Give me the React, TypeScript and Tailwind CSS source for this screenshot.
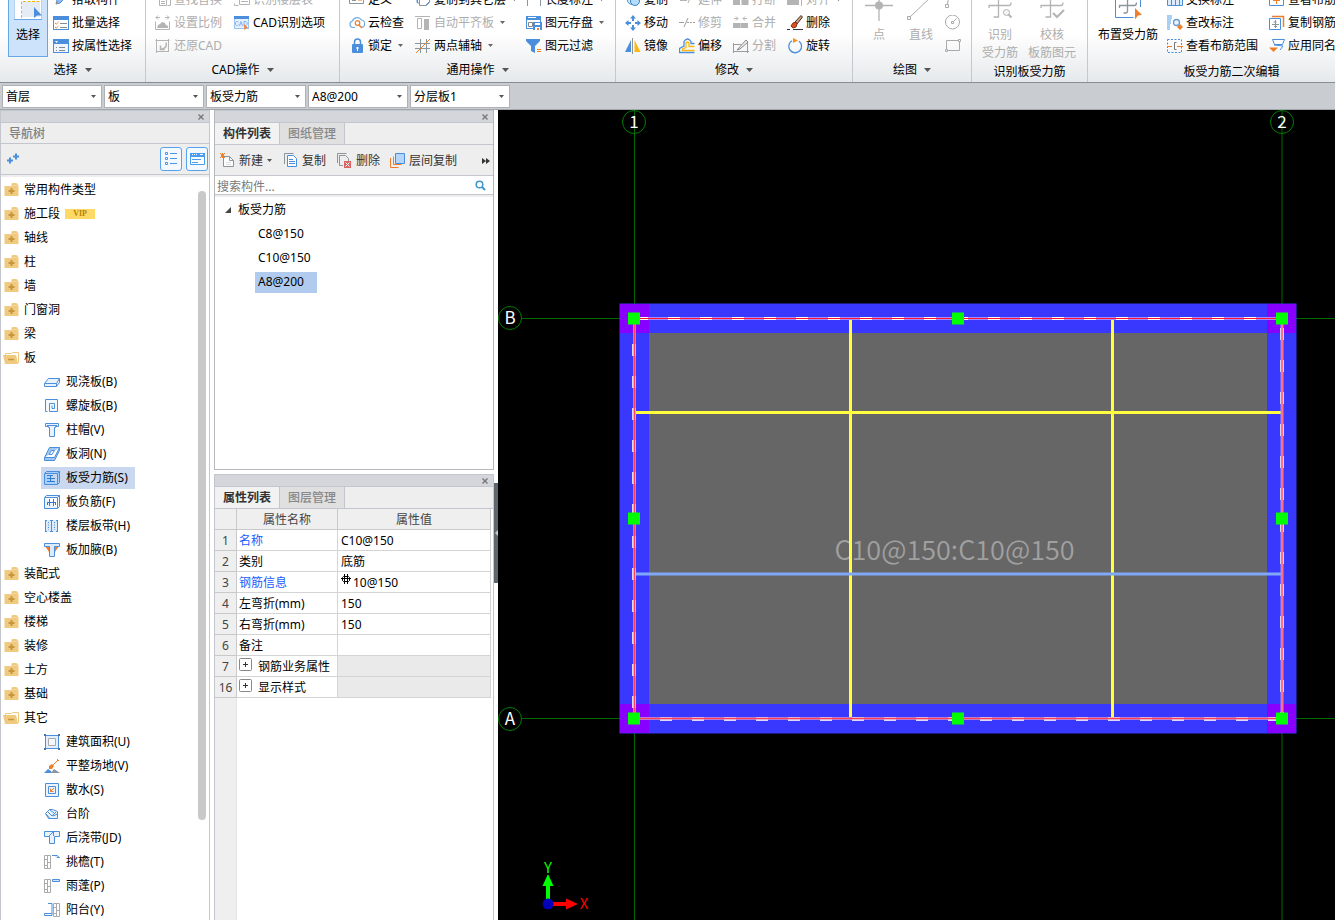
import type { ReactNode } from 'react';

const B = '#4a8edc';
const G = '#b4b4b4';
const O = '#f07d28';
const D = '#8a959c';

function Svg({ children, size = 16, className = '' }: { children: ReactNode; size?: number; className?: string }) {
  return (
    <svg
      viewBox={`0 0 ${size} ${size}`}
      width={size}
      height={size}
      fill="none"
      strokeWidth="1"
      className={`shrink-0 ${className}`}
      aria-hidden="true"
    >
      {children}
    </svg>
  );
}

function Caret({ big = false, className = '' }: { big?: boolean; className?: string }) {
  return big ? (
    <svg width="7" height="4" viewBox="0 0 7 4" className={`shrink-0 ${className}`} aria-hidden="true">
      <path d="M0 0h7L3.5 4z" fill="currentColor" />
    </svg>
  ) : (
    <svg width="5" height="3" viewBox="0 0 5 3" className={`shrink-0 ${className}`} aria-hidden="true">
      <path d="M0 0h5L2.5 3z" fill="currentColor" />
    </svg>
  );
}

/* ---------- ribbon icons ---------- */

const ic = {
  pick: (
    <Svg>
      <path d="M3 12l1-4 7-7 3 3-7 7z" fill="#8fbdf0" stroke={B} />
      <path d="M3 12l2-1-1-2z" fill={O} />
    </Svg>
  ),
  batch: (
    <Svg>
      <rect x=".5" y="1.5" width="15" height="13" fill="#fff" stroke={B} />
      <path d="M1 2h14v3H1z" fill={B} />
      <path d="M2 8l1.200 1.200L5.500 7M2 12l1.200 1.200L5.500 11" stroke={O} />
      <path d="M7 8.500h7M7 12.500h7" stroke="#888" />
    </Svg>
  ),
  attr: (
    <Svg>
      <rect x=".5" y="1.500" width="15" height="13" fill="#eef5fd" stroke={B} />
      <path d="M1 2h14v4H1z" fill={B} />
      <path d="M2 3h3L3.500 5z" fill="#fff" />
      <path d="M3 9.500h1M3 12.500h1M6 9.500h6M6 12.500h6" stroke="#888" />
    </Svg>
  ),
  replace: (
    <Svg>
      <path d="M4.500 4.500h7v9h-7zM6 7.500h4M6 9.500h4M6 11.500h4M12.500 4.500h3v9h-3" stroke={G} />
    </Svg>
  ),
  scale: (
    <Svg>
      <path d="M.5 6.500v8h14v-8M1 2.500h4M10 2.500h4M3 .5l-2 2 2 2M12 .5l2 2-2 2" stroke={G} />
      <path d="M2 13l1-3 2-1 2-2 3 1 1 2 2 1v2z" fill={G} />
    </Svg>
  ),
  restore: (
    <Svg>
      <path d="M1.500 1v14M.5 2.500h14M13.500 1v12M1 13.500h13" stroke={G} />
      <path d="M6 11.500c5-1 6-4 5-7M5.500 7.500v4h4" stroke={G} strokeWidth="1.500" />
    </Svg>
  ),
  floorTable: (
    <Svg>
      <path d="M1.500 3.500h3M.5 11.500v2h4M5.500 4.500h10v8h-10zM7 7.500h7M7 9.500h7" stroke={G} />
    </Svg>
  ),
  cadOption: (
    <Svg>
      <rect x=".5" y="1.500" width="14" height="12" fill="#e3effc" stroke="#9cc3ef" />
      <path d="M0 1h15v3H0z" fill={B} />
      <path
        d="M4.500 7.500l-1-1h-1l-1 1v2l1 1h1l1-1M5.500 11l1.500-4.500L8.500 11M10 6.500h2l1 1v2l-1 1h-2z"
        stroke="#7fb0e8"
      />
      <path d="M10 9l4 4-2 .3-1.500 2.200z" fill={O} />
    </Svg>
  ),
  define: (
    <Svg>
      <path d="M.5 2v9.500h14V2" stroke={D} />
      <path d="M3 5.500h4M3 8.500h4" stroke={D} />
      <path d="M9 4h4v5H9z" fill="#f9b88a" />
    </Svg>
  ),
  cloud: (
    <Svg>
      <path
        d="M6 12.500H4a3.300 3.300 0 01-.5-6.500 5 5 0 019-1A3.800 3.800 0 0112.500 12.500"
        stroke="#6cabea"
        strokeWidth="1.200"
      />
      <circle cx="8.500" cy="8" r="2.300" stroke={O} strokeWidth="1.200" />
      <path d="M10 10l3 3" stroke={O} strokeWidth="1.500" />
    </Svg>
  ),
  lock: (
    <Svg>
      <path d="M5.500 7V4a3 3 0 016 0v3" stroke={B} strokeWidth="1.500" />
      <rect x="3" y="6" width="11" height="9" rx="1" fill={B} />
      <path d="M7.500 9h2v2h-.5v2h-1v-2h-.5z" fill="#fff" />
    </Svg>
  ),
  copyFloor: (
    <Svg>
      <path d="M2.500 2v9h2" stroke={D} />
      <path d="M4.500 1.500h10v9l-3 3h-7z" fill="#fff" stroke={D} />
      <path d="M2 2.500v8M11 13l3-3" stroke={B} />
    </Svg>
  ),
  align: (
    <Svg>
      <path d="M0 1.500h15" stroke={G} />
      <path d="M2.500 3.500h4v10h-4z" stroke={G} />
      <path d="M9 4h5v11H9z" fill={G} />
    </Svg>
  ),
  axis: (
    <Svg>
      <path d="M5.500 1v14M11.500 1v14M0 5.500h15M0 10.500h15" stroke={D} />
      <path d="M1 15L15 1" stroke={O} />
    </Svg>
  ),
  length: (
    <Svg>
      <path d="M1.500 2v12M14.500 2v12M2 5.500h12" stroke={D} />
    </Svg>
  ),
  store: (
    <Svg>
      <rect x=".5" y="1.500" width="14" height="12" fill="#fff" stroke={B} />
      <path d="M0 1h15v4H0z" fill={B} />
      <path d="M2 2.500h8" stroke="#fff" />
      <path d="M2.500 7.500h4v4h-4z" stroke="#888" />
      <path d="M7 7h9v8H7z" fill={B} />
      <path d="M9 8h5v2H9z" fill="#fff" />
      <path d="M9 12h5v3H9z" fill="#fff" />
      <path d="M11 13h2v2h-2z" fill={O} />
    </Svg>
  ),
  filter: (
    <Svg>
      <path d="M0 1h14v2L9 8v7l-4-2V8L0 3z" fill={B} />
      <path d="M11 11.500h4M11 13.500h4" stroke={O} />
    </Svg>
  ),
  copyBlue: (
    <Svg>
      <circle cx="7" cy="8" r="4.500" fill="#d8ebfc" stroke={B} />
      <circle cx="10" cy="9" r="4.500" fill="#b8dbf8" stroke="#2f86c8" />
    </Svg>
  ),
  move: (
    <Svg>
      <path
        d="M8 0l3 3.500H9V6H7V3.500H5zM8 16l3-3.500H9V10H7v2.500H5zM0 8l3.500-3v2H6v2H3.500v2zM16 8l-3.500-3v2H10v2h2.500v2z"
        fill={B}
      />
    </Svg>
  ),
  mirror: (
    <Svg>
      <path d="M6 2v12H0z" fill={B} />
      <path d="M9.500 2v12h6z" fill="#fdb813" />
      <path d="M7.500 0v16" stroke={D} />
    </Svg>
  ),
  extend: (
    <Svg>
      <path d="M1 8.500h7M13 1L9 11" stroke={G} />
    </Svg>
  ),
  trim: (
    <Svg>
      <path d="M0 7.500h5M8 7.500h2M11 7.500h2M14 7.500h2M9 3l-4 9" stroke="#9c9c9c" />
    </Svg>
  ),
  offset: (
    <Svg>
      <path d="M15.500 5.500H12V3.500q-3.500-5-7 0v4.500L.5 10.500v4h15" stroke={B} strokeWidth="1.300" />
      <path d="M15.500 8.500H10V5q-1.500-2-3 0v4.500L3.500 11v1.500h12" stroke="#fdb813" strokeWidth="1.300" />
    </Svg>
  ),
  cut: (
    <Svg>
      <path d="M0 7h7v6H0zM8.500 7h7v6h-7z" fill={G} />
    </Svg>
  ),
  merge: (
    <Svg>
      <path d="M0 8h15v5H0z" fill={G} />
      <path d="M7.500 8v5" stroke="#ccc" />
      <path d="M1 3.500h4M10 3.500h4M3 1.500l2 2-2 2M12 1.500l-2 2 2 2" stroke={G} />
    </Svg>
  ),
  split: (
    <Svg>
      <path d="M.5 5v10M14.500 5v10M0 6.500h8M0 13.500h16" stroke="#9c9c9c" />
      <path d="M4 12l9-10 2 2-8 7z" fill="#eee" stroke="#888" />
    </Svg>
  ),
  alignTo: (
    <Svg>
      <path d="M0 4h12v9H0z" fill={G} />
      <path d="M14.500 2v12" stroke={G} />
    </Svg>
  ),
  brush: (
    <Svg>
      <path d="M14 .5L8 7l2 2 5.500-7z" fill="#c9a58c" stroke="#4a2c1c" />
      <path d="M9 7l-3 1-2 3 2 2 3-1 1-3z" fill="#e0501c" stroke="#8a2f10" />
      <path d="M0 14.500h3M6 14.500h10" stroke="#333" />
    </Svg>
  ),
  rotate: (
    <Svg>
      <path d="M5 2.800a6.400 6.400 0 107 .4" stroke={B} strokeWidth="1.300" />
      <path d="M6 0l5 2.500L6 5z" fill="#f6921e" />
    </Svg>
  ),
  swap: (
    <Svg>
      <path d="M.5 5.500h15v8H.5zM4.500 8v5M8.500 8v5M12.500 8v5" fill="#dcecfc" stroke={B} />
    </Svg>
  ),
  check: (
    <Svg>
      <path d="M0 0h5v4H4v5H3v6H0z" fill="#a8cff6" />
      <circle cx="9.500" cy="7.500" r="3" fill="#e8f4ff" stroke="#6c9ad0" strokeWidth="1.300" />
      <path d="M13 9l3 3-3 3-3-3z" fill={O} />
    </Svg>
  ),
  range: (
    <Svg>
      <path d="M.5 1.500h14v13H.5z" stroke={B} strokeDasharray="2 1.500" />
      <path d="M0 8.500h5M10 8.500h6" stroke={O} />
      <path d="M9.500 4.500h-2v7h2" stroke="#777" />
    </Svg>
  ),
  viewBar: (
    <Svg>
      <path d="M.5 3v10.500h14V3" stroke={B} />
      <path d="M7.500 4v8M4 8.500h7M6 6l1.500-2L9 6" stroke={O} />
    </Svg>
  ),
  copyBar: (
    <Svg>
      <path d="M3 1.500h11.500V12" stroke={O} strokeWidth="1.500" />
      <path d="M.5 3.500h11v11H.5z" fill="#fff" stroke={B} />
      <path d="M6.500 5v8M3 9.500h7M4.500 7h3M5 11.500h3" stroke={D} />
    </Svg>
  ),
  apply: (
    <Svg>
      <path d="M3.500 1.500h12l-2 5h-8zM5 7l9 1-3 4" fill="#fff" stroke={B} />
      <path d="M0 9.500h9L4.500 14z" fill={O} />
    </Svg>
  ),
};

/* ---------- navigation tree icons ---------- */

const FolderClosed = () => (
  <Svg>
    <path d="M9 1h4l2 1v1H8z" fill="#efca80" />
    <path d="M1.500 4H8l1-.8h6.500V14h-14z" fill="#efca80" />
    <path d="M8.500 6v6M5.500 9h6" stroke="#c8963c" strokeWidth="2" />
  </Svg>
);

const FolderOpen = () => (
  <Svg>
    <path d="M2.500 5V3.500h6l1-1h6V13" fill="#fff" stroke="#efca80" />
    <path d="M0 5h13l2 9H2z" fill="#efca80" />
    <path d="M5 9.500h6" stroke="#c8963c" strokeWidth="1.500" />
  </Svg>
);

const leaf = {
  slab: (
    <Svg>
      <path d="M.5 9.500l4-5h11l-3 5zM.5 9.500v3h12v-3M12.500 12.500l3-4v-4" fill="#eaf3fd" stroke={B} />
    </Svg>
  ),
  spiral: (
    <Svg>
      <path d="M3.500 13.500h-2v-12h12v12h-8v-8h5v5h-2.500v-3" fill="#f4f9fe" stroke={B} />
    </Svg>
  ),
  cap: (
    <Svg>
      <path d="M1.500 1.500h13v3h-3v1h-1v9h-5v-9h-1v-1h-3z" fill="#eaf3fd" stroke={B} />
      <path d="M3 3.500h10" stroke={B} />
    </Svg>
  ),
  hole: (
    <Svg>
      <path d="M5.500 1.500h10l-5 10H.5zM.5 11.500v3h10l5-10v-3" fill="#9fc8f4" stroke={B} />
      <path d="M7.500 4.500h3l-2.500 4h-3z" fill="#fff" stroke={B} />
    </Svg>
  ),
  rebar: (
    <Svg>
      <path d="M.5 3.500l2-2h13v11l-2 2H.5zM13.500 14v-10.500H1M13.500 3.500l2-2" fill="#a9d0fa" stroke={B} />
      <path d="M3 5.500h6M3 8.500h8M3 11.500h8M6.500 6v5" stroke="#2f7bd0" />
    </Svg>
  ),
  negRebar: (
    <Svg>
      <path d="M.5 3.500l2-2h13v11l-2 2H.5zM13.500 14v-10.500H1M13.500 3.500l2-2" fill="#eaf3fd" stroke={B} />
      <path d="M5.500 5v7M9.500 5v7M3 8.500h8M3.500 8v3M11.500 8v3" stroke="#2f7bd0" />
    </Svg>
  ),
  strip: (
    <Svg>
      <path d="M1 2h13v12H1z" fill="#dceafa" />
      <path d="M1.500 2v12M7.500 2v12M13.500 2v12" stroke={B} />
      <path d="M4.500 4v8M10.500 4v8" stroke={B} strokeDasharray="1 1.500" />
      <path d="M1 2.500h2M6 2.500h3M12 2.500h2M1 13.500h2M6 13.500h3M12 13.500h2" stroke={B} />
    </Svg>
  ),
  haunch: (
    <Svg>
      <path d="M1 4h14l-4 6H5z" fill={O} />
      <path d="M.5 1.500h15v3h-5v10h-5v-10h-5z" fill="#dceafa" stroke={B} />
    </Svg>
  ),
  area: (
    <Svg>
      <path d="M1.500 1.500h13v13h-13z" fill="#e3effc" stroke={B} />
      <path d="M4.500 4.500h7v7h-7z" fill="#f4f8fd" stroke="#aaa" />
      <path d="M0 0h2v2H0zM14 0h2v2h-2zM0 14h2v2H0zM14 14h2v2h-2z" fill="#4a74a8" />
    </Svg>
  ),
  ground: (
    <Svg>
      <path d="M0 15l4-4 3 2 1 2z" fill={B} />
      <path d="M7 15l3-4 6 4z" fill="#8a959c" />
      <path d="M9 7l5-5M13 1l2 2" stroke={O} />
      <path d="M5 11V8l3-2 2 2-2 3z" fill={O} />
    </Svg>
  ),
  apron: (
    <Svg>
      <path d="M1.500 1.500h13v13h-13zM4.500 4.500h7v7h-7z" fill="#eaf3fd" stroke={B} />
      <path d="M10 6L6.500 9.500M6.500 6.500v3h3" stroke={O} />
    </Svg>
  ),
  steps: (
    <Svg>
      <path d="M1.500 7.500l4-4h3l5 2v7h-9z" fill="#eaf3fd" stroke={B} />
      <path d="M2 8l4 4.500M4 6l4 4 4-4M6 4l4 3M9 10l4.500-2" stroke={B} />
    </Svg>
  ),
  pour: (
    <Svg>
      <path d="M.5 1.500h15v5h-5v7h-5v-7h-5z" fill="#eaf3fd" stroke={B} />
      <path d="M5 6l4-4M9.500 2v4" stroke={B} />
    </Svg>
  ),
  eave: (
    <Svg>
      <path d="M.5 1.500h6v13h-6zM3.500 2v12M1 5.500h3M3.500 8.500h3M1 11.500h3" stroke="#aaa" />
      <path d="M8 1.500h5l2.500 2H13L12 2.500" stroke={B} />
    </Svg>
  ),
  canopy: (
    <Svg>
      <path d="M.5 1.500h6v13h-6zM3.500 2v12M1 5.500h3M3.500 8.500h3M1 11.500h3" stroke="#aaa" />
      <path d="M8.500 1.500h7v2h-7z" fill="#cfe3fa" stroke={B} />
    </Svg>
  ),
  balcony: (
    <Svg>
      <path d="M9.500 1.500h6v13h-6zM12.500 2v12M10 5.500h3M12.500 8.500h3M10 11.500h3" stroke="#aaa" />
      <path d="M4 1.500h4v12M8 11.500H.5v2H8" stroke={B} />
    </Svg>
  ),
};

/* ---------- ribbon ---------- */

function Tool({ icon, label, caret, disabled }: { icon: ReactNode; label: string; caret?: boolean; disabled?: boolean }) {
  return (
    <button
      type="button"
      disabled={disabled}
      className="flex h-[23px] items-center gap-[3px] whitespace-nowrap text-left text-black disabled:text-[#adadad]"
    >
      {icon}
      <span>{label}</span>
      {caret && <Caret className="ml-[3px] text-[#666]" />}
    </button>
  );
}

function Group({
  label,
  width,
  caret = true,
  children,
}: {
  label: string;
  width: string;
  caret?: boolean;
  children: ReactNode;
}) {
  return (
    <section className={`flex h-[94px] shrink-0 flex-col border-r border-[#c6c9cc] ${width}`}>
      <div className="flex min-h-0 flex-1 items-start">{children}</div>
      <div className={`flex items-center justify-center gap-[7px] ${caret ? 'h-[25px]' : 'h-[21px]'}`}>
        <span>{label}</span>
        {caret && <Caret big className="text-[#555]" />}
      </div>
    </section>
  );
}

function BigTool({ icon, lines, width, disabled }: { icon: ReactNode; lines: string[]; width: string; disabled?: boolean }) {
  return (
    <button
      type="button"
      disabled={disabled}
      className={`flex shrink-0 flex-col items-center pt-[5px] text-black disabled:text-[#adadad] ${width}`}
    >
      {icon}
      {lines.map((line, i) => (
        <span key={line} className={`whitespace-nowrap leading-[18px] ${i === 0 ? 'mt-[5px]' : ''}`}>
          {line}
        </span>
      ))}
    </button>
  );
}

function Ribbon() {
  return (
    <header className="flex h-[83px] shrink-0 items-end overflow-hidden border-b border-[#868d93] bg-linear-to-b from-white from-40% to-[#e6e9eb]">
      <Group label="选择" width="w-[146px]">
        <button
          type="button"
          className="ml-2 flex h-[69px] w-10 shrink-0 flex-col items-center border border-[#66a7e8] bg-[#cce3fb] pt-1"
        >
          <Svg size={28}>
            <path d="M0 0h28v26.500H0z" fill="#fff" stroke="#69a6e6" />
            <path d="M8 9h18v15H8z" fill="#e6ecf6" />
            <path d="M7.500 25V8.500H27" stroke="#f5b400" strokeDasharray="3 1.500" />
            <path d="M20 14v11l3-2.500h5z" fill={B} />
          </Svg>
          <span className="mt-[5px] leading-[18px]">选择</span>
        </button>
        <div className="ml-[5px]">
          <Tool icon={ic.pick} label="拾取构件" />
          <Tool icon={ic.batch} label="批量选择" />
          <Tool icon={ic.attr} label="按属性选择" />
        </div>
      </Group>

      <Group label="CAD操作" width="w-[194px]">
        <div className="ml-[9px] w-[79px]">
          <Tool icon={ic.replace} label="查找替换" disabled />
          <Tool icon={ic.scale} label="设置比例" disabled />
          <Tool icon={ic.restore} label="还原CAD" disabled />
        </div>
        <div>
          <Tool icon={ic.floorTable} label="识别楼层表" disabled />
          <Tool icon={ic.cadOption} label="CAD识别选项" />
        </div>
      </Group>

      <Group label="通用操作" width="w-[276px]">
        <div className="ml-[9px] w-[66px]">
          <Tool icon={ic.define} label="定义" />
          <Tool icon={ic.cloud} label="云检查" />
          <Tool icon={ic.lock} label="锁定" caret />
        </div>
        <div className="w-[111px]">
          <Tool icon={ic.copyFloor} label="复制到其它层" caret />
          <Tool icon={ic.align} label="自动平齐板" caret disabled />
          <Tool icon={ic.axis} label="两点辅轴" caret />
        </div>
        <div>
          <Tool icon={ic.length} label="长度标注" caret />
          <Tool icon={ic.store} label="图元存盘" caret />
          <Tool icon={ic.filter} label="图元过滤" />
        </div>
      </Group>

      <Group label="修改" width="w-[237px]">
        <div className="ml-[9px] grid grid-cols-[54px_54px_54px_60px]">
          <Tool icon={ic.copyBlue} label="复制" />
          <Tool icon={ic.extend} label="延伸" disabled />
          <Tool icon={ic.cut} label="打断" disabled />
          <Tool icon={ic.alignTo} label="对齐" caret disabled />
          <Tool icon={ic.move} label="移动" />
          <Tool icon={ic.trim} label="修剪" disabled />
          <Tool icon={ic.merge} label="合并" disabled />
          <Tool icon={ic.brush} label="删除" />
          <Tool icon={ic.mirror} label="镜像" />
          <Tool icon={ic.offset} label="偏移" />
          <Tool icon={ic.split} label="分割" disabled />
          <Tool icon={ic.rotate} label="旋转" />
        </div>
      </Group>

      <Group label="绘图" width="w-[119px]">
        <BigTool
          width="ml-[5px] w-[42px]"
          disabled
          lines={['点']}
          icon={
            <Svg size={28}>
              <path d="M0 12.500h28M14 0v28" stroke={G} strokeWidth="1.300" />
              <circle cx="14" cy="12.500" r="4" fill={G} />
            </Svg>
          }
        />
        <BigTool
          width="w-[42px]"
          disabled
          lines={['直线']}
          icon={
            <Svg size={28}>
              <path d="M3 24L26 2" stroke="#aaa" />
              <path d="M.5 23.500h3v3h-3z" fill="#f4f4f4" stroke="#aaa" />
            </Svg>
          }
        />
        <div className="ml-[3px]">
          <button type="button" disabled aria-label="弧" className="flex h-[23px] items-center">
            <Svg>
              <path d="M2.500 12q0-8 9-10M.5 12.500h3v3h-3z" stroke="#aaa" />
            </Svg>
          </button>
          <button type="button" disabled aria-label="圆" className="flex h-[23px] items-center">
            <Svg>
              <circle cx="7.500" cy="7" r="7" stroke="#aaa" />
              <path d="M6.500 6.500h2v2h-2zM8.500 6.500l3-3" stroke="#aaa" />
            </Svg>
          </button>
          <button type="button" disabled aria-label="矩形" className="flex h-[23px] items-center">
            <Svg>
              <path d="M1.500 2.500h13v10h-13z" stroke="#aaa" />
              <path d="M.5 11.500h2v2h-2zM13.500 1.500h2v2h-2z" fill="#fff" stroke="#aaa" />
            </Svg>
          </button>
        </div>
      </Group>

      <Group label="识别板受力筋" width="w-[116px]" caret={false}>
        <BigTool
          width="ml-[2px] w-[52px]"
          disabled
          lines={['识别', '受力筋']}
          icon={
            <Svg size={28}>
              <path d="M3 15v-2.500h20q2 0 2-3M12.500 0v24h-5" stroke={G} strokeWidth="1.300" />
              <circle cx="20.500" cy="19.500" r="3" fill="#f4f4f4" stroke={G} />
              <path d="M22.500 21.500l3 3" stroke={G} strokeWidth="2" />
            </Svg>
          }
        />
        <BigTool
          width="w-[52px]"
          disabled
          lines={['校核', '板筋图元']}
          icon={
            <Svg size={28}>
              <path d="M3 15v-2.500h20q2 0 2-3M12.500 0v24h-5" stroke={G} strokeWidth="1.300" />
              <path d="M15 20l4 4 7-7" stroke={G} strokeWidth="2" />
            </Svg>
          }
        />
      </Group>

      <Group label="板受力筋二次编辑" width="w-[288px]" caret={false}>
        <BigTool
          width="ml-2 w-16"
          lines={['布置受力筋']}
          icon={
            <Svg size={28}>
              <path d="M1.500 0v24.500h18M26.500 0v14" stroke={B} />
              <path d="M5.500 15v-2.500h15q2 0 2-3M13.500 0v18q0 2-2 2h-2" stroke={D} strokeWidth="1.300" />
              <path d="M21 15l7 7-4 .5-3 4z" fill={O} />
            </Svg>
          }
        />
        <div className="ml-[7px] w-[102px]">
          <Tool icon={ic.swap} label="交换标注" />
          <Tool icon={ic.check} label="查改标注" />
          <Tool icon={ic.range} label="查看布筋范围" />
        </div>
        <div>
          <Tool icon={ic.viewBar} label="查看布筋情况" />
          <Tool icon={ic.copyBar} label="复制钢筋" />
          <Tool icon={ic.apply} label="应用同名板" />
        </div>
      </Group>
    </header>
  );
}

/* ---------- context selectors ---------- */

const selectors = [
  { name: '楼层', value: '首层' },
  { name: '构件大类', value: '板' },
  { name: '构件类型', value: '板受力筋' },
  { name: '构件', value: 'A8@200' },
  { name: '分层', value: '分层板1' },
];

function SelectorBar() {
  return (
    <div className="flex h-[27px] shrink-0 gap-[2px] border-b border-[#a3a7ac] bg-[#c9ccd1] pl-[2px] pt-[2px]">
      {selectors.map((s) => (
        <label key={s.name} className="relative block h-[23px] w-[100px]">
          <select
            aria-label={s.name}
            className="h-full w-full appearance-none border border-[#aeb1b5] bg-white pl-[3px] leading-[20px] text-black"
          >
            <option>{s.value}</option>
          </select>
          <Caret className="pointer-events-none absolute right-[6px] top-[10px] text-[#555]" />
        </label>
      ))}
    </div>
  );
}

/* ---------- docks ---------- */

function DockStrip() {
  return (
    <div className="flex h-[13px] shrink-0 items-center justify-end border-y border-[#c3c6cc] bg-[#d5d6db] pr-[5px]">
      <button type="button" aria-label="关闭" className="flex">
        <svg width="6" height="6" viewBox="0 0 6 6" aria-hidden="true">
          <path d="M.5.5l5 5M5.500.5l-5 5" stroke="#777" strokeWidth="1.400" />
        </svg>
      </button>
    </div>
  );
}

type Node = { label: string; vip?: boolean; children?: { label: string; icon: ReactNode; active?: boolean }[] };

const tree: Node[] = [
  { label: '常用构件类型' },
  { label: '施工段', vip: true },
  { label: '轴线' },
  { label: '柱' },
  { label: '墙' },
  { label: '门窗洞' },
  { label: '梁' },
  {
    label: '板',
    children: [
      { label: '现浇板(B)', icon: leaf.slab },
      { label: '螺旋板(B)', icon: leaf.spiral },
      { label: '柱帽(V)', icon: leaf.cap },
      { label: '板洞(N)', icon: leaf.hole },
      { label: '板受力筋(S)', icon: leaf.rebar, active: true },
      { label: '板负筋(F)', icon: leaf.negRebar },
      { label: '楼层板带(H)', icon: leaf.strip },
      { label: '板加腋(B)', icon: leaf.haunch },
    ],
  },
  { label: '装配式' },
  { label: '空心楼盖' },
  { label: '楼梯' },
  { label: '装修' },
  { label: '土方' },
  { label: '基础' },
  {
    label: '其它',
    children: [
      { label: '建筑面积(U)', icon: leaf.area },
      { label: '平整场地(V)', icon: leaf.ground },
      { label: '散水(S)', icon: leaf.apron },
      { label: '台阶', icon: leaf.steps },
      { label: '后浇带(JD)', icon: leaf.pour },
      { label: '挑檐(T)', icon: leaf.eave },
      { label: '雨蓬(P)', icon: leaf.canopy },
      { label: '阳台(Y)', icon: leaf.balcony },
    ],
  },
];

function NavigationDock() {
  return (
    <aside className="flex w-[210px] shrink-0 flex-col border-x border-[#c3c6cc] bg-white">
      <DockStrip />
      <h2 className="flex h-[21px] shrink-0 items-center border-b border-[#c3c6cc] bg-[#eeeeee] pl-2 pt-px font-medium text-[#808080]">
        导航树
      </h2>
      <div className="flex h-[31px] shrink-0 items-center justify-between border-b border-[#c3c6cc] bg-[#eeeeee] pl-[5px] pr-[1px]">
        <button type="button" aria-label="添加">
          <Svg>
            <path d="M4 6.500v6M1 9.500h6M10 2.500v6M7 5.500h6" stroke={B} strokeWidth="2" />
          </Svg>
        </button>
        <div className="flex gap-1">
          <button
            type="button"
            aria-label="列表视图"
            className="flex h-6 w-[22px] items-center justify-center rounded-[3px] border border-[#55a3ee] bg-[#f3f9ff]"
          >
            <Svg>
              <path
                d="M2.500 1.500h2v2h-2zM2.500 6.500h2v2h-2zM2.500 11.500h2v2h-2zM7 2.500h7M7 7.500h7M7 12.500h7"
                stroke="#4a96e4"
              />
            </Svg>
          </button>
          <button
            type="button"
            aria-label="卡片视图"
            className="flex h-6 w-[22px] items-center justify-center rounded-[3px] border border-[#55a3ee] bg-[#f3f9ff]"
          >
            <Svg>
              <path d="M1.500 2.500h14v11h-14z" fill="#fff" stroke="#4a9cee" />
              <path d="M1 2h15v4H1z" fill="#4a9cee" />
              <path d="M3 3.500h1M5 3.500h1M7 3.500h1M11 3.500h3" stroke="#fff" />
              <path d="M3 8.500h9M3 11.500h6" stroke="#4a9cee" />
            </Svg>
          </button>
        </div>
      </div>
      <div className="flex min-h-0 flex-1 overflow-hidden border-t-2 border-[#eeeeee]">
        <ul className="min-w-0 flex-1 pt-px">
          {tree.map((n) => (
            <li key={n.label}>
              <button type="button" className="flex h-6 items-center pl-[2px] text-black">
                {n.children ? <FolderOpen /> : <FolderClosed />}
                <span className="ml-[5px]">{n.label}</span>
                {n.vip && (
                  <span className="ml-[5px] flex h-[10px] w-[30px] items-center justify-center bg-[#ffd966] font-['Liberation_Serif',serif] text-[8px] font-bold text-[#b08408]">
                    VIP
                  </span>
                )}
              </button>
              {n.children && (
                <ul>
                  {n.children.map((c) => (
                    <li key={c.label} className="flex h-6 items-center pl-10">
                      <button
                        type="button"
                        className={`flex h-[22px] items-center gap-[6px] pl-[3px] pr-[7px] text-black ${c.active ? 'bg-[#c9d8ee]' : ''}`}
                      >
                        {c.icon}
                        <span>{c.label}</span>
                      </button>
                    </li>
                  ))}
                </ul>
              )}
            </li>
          ))}
        </ul>
        <div className="mr-[3px] mt-[14px] h-[629px] w-2 shrink-0 rounded-full bg-[#c9c9c9]" />
      </div>
    </aside>
  );
}

function Tabs({ items }: { items: string[] }) {
  return (
    <div role="tablist" className="flex h-[22px] shrink-0 border-b border-[#c3c6cc] bg-[#eeeeee]">
      {items.map((t, i) => (
        <button
          key={t}
          type="button"
          role="tab"
          aria-selected={i === 0}
          className={`w-[65px] border-r border-[#c3c6cc] ${i === 0 ? 'bg-[#f2f2f2] font-bold text-[#333]' : 'bg-[#e0e0e0] font-medium text-[#888]'}`}
        >
          {t}
        </button>
      ))}
    </div>
  );
}

function ComponentDock() {
  return (
    <section className="flex h-[360px] shrink-0 flex-col border-x border-b border-[#b4b7bc] bg-white">
      <DockStrip />
      <Tabs items={['构件列表', '图纸管理']} />
      <div className="flex h-[31px] shrink-0 items-center border-b border-[#c3c6cc] bg-[#eeeeee] pl-[5px] pr-[3px] pt-px text-[#333]">
        <button type="button" className="flex items-center gap-[3px]">
          <Svg>
            <path d="M3.500 3.500h6l4 4v6h-10z" fill="#fff" stroke={D} />
            <path d="M9.500 3.500v4h4" stroke={D} />
            <path d="M0 .5h1M2 .5h1M4 .5h1M0 4.500h1M2 4.500h1M4 4.500h1M1 1.500h3M1 3.500h3M1 2.500h3" stroke={O} />
            <path d="M6 9.500h5M6 11.500h5" stroke="#ddd" />
          </Svg>
          <span>新建</span>
          <Caret className="ml-px text-[#555]" />
        </button>
        <button type="button" className="ml-3 flex items-center gap-[2px]">
          <Svg>
            <path d="M.5 11V.5h9" stroke={D} />
            <path d="M3.500 2.500h6l3 3v8h-9z" fill="#fff" stroke={B} />
            <path d="M5 6.500h4M5 8.500h6M5 10.500h6" stroke={B} />
          </Svg>
          <span>复制</span>
        </button>
        <button type="button" className="ml-[11px] flex items-center gap-[3px]">
          <Svg>
            <path d="M.5 10V.5h9M6 12.500H2.500v-10h6l3 3V8" stroke={D} />
            <path d="M7 8h7v7H7z" fill="#d86464" />
            <path d="M8.500 9.500l4 4M12.500 9.500l-4 4" stroke="#fff" />
          </Svg>
          <span>删除</span>
        </button>
        <button type="button" className="ml-[10px] flex items-center gap-[3px]">
          <Svg>
            <path d="M.5 5v9.500h8M3.500 3.500v8h8" stroke={O} />
            <path d="M5.500.5h9v10h-9z" fill="#b5d6fa" stroke={B} />
          </Svg>
          <span>层间复制</span>
        </button>
        <button type="button" aria-label="更多" className="ml-auto">
          <svg width="8" height="6" viewBox="0 0 8 6" aria-hidden="true">
            <path d="M0 0l4 3-4 3zM4 0l4 3-4 3z" fill="#333" />
          </svg>
        </button>
      </div>
      <label className="flex h-[19px] shrink-0 items-center border-b border-[#c3c6cc] pl-[2px] pr-[7px]">
        <input
          type="text"
          aria-label="搜索构件"
          placeholder="搜索构件..."
          className="h-[18px] min-w-0 flex-1 pt-[2px] leading-[16px] outline-none placeholder:text-[#7a7a7a]"
        />
        <svg width="11" height="11" viewBox="0 0 11 11" fill="none" aria-hidden="true">
          <circle cx="4.500" cy="4.500" r="3.300" stroke="#3d97cc" strokeWidth="1.500" />
          <path d="M7 7l3 3" stroke="#3d97cc" strokeWidth="2" />
        </svg>
      </label>
      <ul className="border-t-2 border-[#eeeeee] pt-px text-black">
        <li className="flex h-6 items-center gap-[6px] pl-[10px]">
          <svg width="7" height="6" viewBox="0 0 7 6" aria-hidden="true">
            <path d="M6 0v6H0z" fill="#444" />
          </svg>
          <span>板受力筋</span>
        </li>
        {['C8@150', 'C10@150', 'A8@200'].map((c) => (
          <li key={c} className="flex h-6 items-center pl-10">
            <button type="button" className={`h-[21px] pl-[3px] pr-[13px] ${c === 'A8@200' ? 'bg-[#b0cbed]' : ''}`}>
              {c}
            </button>
          </li>
        ))}
      </ul>
    </section>
  );
}

const Expand = () => (
  <svg width="13" height="13" viewBox="0 0 13 13" className="shrink-0 self-start" fill="none" aria-hidden="true">
    <rect x=".5" y=".5" width="12" height="12" rx="1" fill="#fff" stroke="#888" />
    <path d="M4 6.500h5M6.500 4v5" stroke="#333" />
  </svg>
);

const RebarMark = () => (
  <svg width="10" height="12" viewBox="0 0 10 12" className="shrink-0 self-start" fill="none" aria-hidden="true">
    <path d="M2.500 2.500h5l1 1v3l-1 1h-5l-1-1v-3zM3.500 0v10M6.500 0v10M0 4.500h10" stroke="#000" />
  </svg>
);

const properties: { n: number; name: string; value?: string; link?: boolean; rebar?: boolean; group?: boolean }[] = [
  { n: 1, name: '名称', value: 'C10@150', link: true },
  { n: 2, name: '类别', value: '底筋' },
  { n: 3, name: '钢筋信息', value: '10@150', link: true, rebar: true },
  { n: 4, name: '左弯折(mm)', value: '150' },
  { n: 5, name: '右弯折(mm)', value: '150' },
  { n: 6, name: '备注' },
  { n: 7, name: '钢筋业务属性', group: true },
  { n: 16, name: '显示样式', group: true },
];

function PropertyDock() {
  return (
    <section className="flex min-h-0 flex-1 flex-col border-x border-[#c3c6cc] bg-white">
      <DockStrip />
      <Tabs items={['属性列表', '图层管理']} />
      <table className="mr-[2px] table-fixed border-separate border-spacing-0 text-black">
        <colgroup>
          <col className="w-[22px]" />
          <col className="w-[101px]" />
          <col />
        </colgroup>
        <thead>
          <tr className="h-[21px] bg-[#efefef] text-[#444]">
            <th className="border-b border-r border-[#c9c9c9] p-0" aria-label="序号" />
            <th className="border-b border-r border-[#c9c9c9] p-0 pt-[2px] font-normal leading-[18px]">属性名称</th>
            <th className="border-b border-r border-[#c9c9c9] p-0 pt-[2px] font-normal leading-[18px]">属性值</th>
          </tr>
        </thead>
        <tbody>
          {properties.map((p) => (
            <tr key={p.n} className="h-[21px]">
              <td className="border-b border-r border-[#c9c9c9] bg-[#efefef] p-0 pt-[2px] text-center leading-[18px] text-[#444]">
                {p.n}
              </td>
              <td className={`border-b border-r border-[#d4d4d4] p-0 ${p.link ? 'text-[#1a5cff]' : ''}`}>
                <div className="flex h-5 items-center gap-[6px] whitespace-nowrap pl-[2px] pt-[2px]">
                  {p.group && <Expand />}
                  <span>{p.name}</span>
                </div>
              </td>
              <td className={`border-b border-r border-[#d4d4d4] p-0 ${p.group ? 'bg-[#eaeaea]' : ''}`}>
                <div className="flex h-5 items-center gap-[2px] pl-[3px] pt-[2px]">
                  {p.rebar && <RebarMark />}
                  <span>{p.value}</span>
                </div>
              </td>
            </tr>
          ))}
        </tbody>
      </table>
      <div className="w-[22px] flex-1 border-r border-[#e4e4e4] bg-[#efefef]" />
    </section>
  );
}

/* ---------- drawing canvas ---------- */

const axisLabels = [
  { x: 634, y: 122, t: '1' },
  { x: 1282, y: 122, t: '2' },
  { x: 510, y: 318, t: 'B' },
  { x: 510, y: 719, t: 'A' },
];

const handles = [
  [634, 318],
  [958, 318],
  [1282, 318],
  [634, 518],
  [1282, 518],
  [634, 718],
  [958, 718],
  [1282, 718],
];

function DrawingCanvas() {
  return (
    <main className="min-w-0 flex-1 overflow-hidden bg-black">
      <svg
        viewBox="498 110 837 810"
        preserveAspectRatio="xMinYMin meet"
        className="block h-full w-full"
        fill="none"
        role="img"
        aria-label="板受力筋平面图"
      >
        <g stroke="#006a00">
          <path d="M634.500 110v810M1282 110v810" />
          <path d="M522 318.500h813M522 718.500h813" />
        </g>
        <rect x="619.500" y="303.500" width="677" height="430" fill="#3838ff" />
        <rect x="649" y="333" width="618" height="371" fill="#666666" />
        <g fill="#8800ff">
          <rect x="620" y="304" width="29" height="29" />
          <rect x="1267" y="304" width="29" height="29" />
          <rect x="620" y="704" width="29" height="29" />
          <rect x="1267" y="704" width="29" height="29" />
        </g>
        <text
          x="954.500"
          y="560"
          textAnchor="middle"
          fontSize="27"
          fill="#a0a0a0"
          fontFamily="'Noto Sans CJK SC', sans-serif"
          fontWeight="350"
        >
          C10@150:C10@150
        </text>
        <g stroke="#ffff40" strokeWidth="3">
          <path d="M850.500 319v399M1112.500 319v399M635 412.500h646" />
        </g>
        <path d="M635 574h646" stroke="#80a8f8" strokeWidth="3" />

        <g stroke="#a98cff" strokeWidth="3">
          <path d="M634 318.500h648M634 718.500h648M634.500 318v400M1282 318v400" />
        </g>
        <path d="M636 318.500h646" stroke="#ffffff" strokeWidth="3" strokeDasharray="12 20" />
        <g stroke="#dcd6ff" strokeWidth="4" strokeDasharray="12 20">
          <path d="M660 719h622" />
          <path d="M634 344v374" />
          <path d="M1282 328v390" />
        </g>
        <path d="M634 318.500h648" stroke="#ff1030" />
        <path d="M634 718.500h648M634.500 318v400" stroke="#ff4050" strokeWidth="1.500" />
        <path d="M1282 318v400" stroke="#ff7080" strokeWidth="2" />

        {handles.map(([x, y]) => (
          <rect key={`${x}-${y}`} x={x - 6} y={y - 5.5} width="12" height="12" fill="#00ff00" />
        ))}

        {axisLabels.map((a) => (
          <g key={a.t}>
            <circle cx={a.x} cy={a.y} r="11.500" stroke="#007d00" />
            <text
              x={a.x}
              y={a.y + 6}
              textAnchor="middle"
              fontSize="17"
              fill="#fff"
              fontFamily="'Noto Sans CJK SC', sans-serif"
            >
              {a.t}
            </text>
          </g>
        ))}

        <path d="M548 904v-18" stroke="#00ff00" strokeWidth="4" />
        <path d="M548 874l-5.500 12h11z" fill="#00ff00" />
        <path d="M548 904h18" stroke="#ff0000" strokeWidth="4" />
        <path d="M578 904l-12-5.500v11z" fill="#ff0000" />
        <circle cx="548" cy="904" r="5.500" fill="#0000b8" />
        <g fontSize="15" textAnchor="middle" fontFamily="'Noto Sans CJK SC', sans-serif">
          <text x="548" y="873" fill="#00ff00">
            Y
          </text>
          <text x="584" y="909" fill="#ff0000">
            X
          </text>
        </g>
      </svg>
    </main>
  );
}

export default function App() {
  return (
    <div className="flex h-screen flex-col overflow-hidden bg-white font-['Noto_Sans','Noto_Sans_CJK_SC',sans-serif] text-[12px] leading-[18px] text-black">
      <Ribbon />
      <SelectorBar />
      <div className="flex min-h-0 flex-1">
        <NavigationDock />
        <div className="ml-1 flex w-[280px] shrink-0 flex-col gap-1">
          <ComponentDock />
          <PropertyDock />
        </div>
        <div className="flex w-1 shrink-0 flex-col pt-[373px]">
          <button type="button" aria-label="折叠面板" className="flex h-[100px] items-center justify-center bg-[#5c6771]">
            <svg width="3" height="6" viewBox="0 0 3 6" aria-hidden="true">
              <path d="M3 0v6L0 3z" fill="#c5cad0" />
            </svg>
          </button>
        </div>
        <DrawingCanvas />
      </div>
    </div>
  );
}
